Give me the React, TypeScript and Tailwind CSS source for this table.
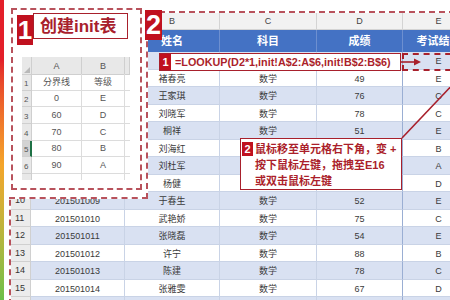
import React from "react";

const COLS = "grid-cols-[20px_94px_95px_97px_86px_72px]";
const MINI = "grid-cols-[10px_50px_43px_5px]";

type Row = { n: number; a?: string; b?: string; c?: string; d?: string; e?: string };

// rows hidden behind the callouts are left blank
const rows: Row[] = [
  { n: 2, e: "E" },
  { n: 3, b: "褚春亮", c: "数学", d: "49", e: "E" },
  { n: 4, b: "王家琪", c: "数学", d: "76", e: "C" },
  { n: 5, b: "刘晓军", c: "数学", d: "78", e: "C" },
  { n: 6, b: "桐祥", c: "数学", d: "51", e: "E" },
  { n: 7, b: "刘海红", e: "B" },
  { n: 8, b: "刘杜军", e: "A" },
  { n: 9, b: "杨健", e: "D" },
  { n: 10, a: "201501009", b: "于春生", c: "数学", d: "52", e: "E" },
  { n: 11, a: "201501010", b: "武艳娇", c: "数学", d: "75", e: "C" },
  { n: 12, a: "201501011", b: "张晓磊", c: "数学", d: "54", e: "E" },
  { n: 13, a: "201501012", b: "许宁", c: "数学", d: "88", e: "B" },
  { n: 14, a: "201501013", b: "陈建", c: "数学", d: "78", e: "C" },
  { n: 15, a: "201501014", b: "张雅雯", c: "数学", d: "67", e: "D" },
  { n: 16 },
];

const mini = [
  ["分界线", "等级"],
  ["0", "E"],
  ["60", "D"],
  ["70", "C"],
  ["80", "B"],
  ["90", "A"],
  ["", ""],
];

function Sheet() {
  return (
    <div className="w-max border-t-2 border-l-2 border-dashed border-[#b8525c]">
      {/* column letters */}
      <div className={`grid ${COLS} h-[17px] bg-[#f2f2f2] text-[9px] text-[#444]`}>
        {["", "", "B", "C", "D", "E"].map((c, i) => (
          <div key={i} className="flex items-end justify-center pb-[1px] border-r border-b border-[#d4d4d4]">
            {c}
          </div>
        ))}
      </div>
      {/* header */}
      <div className={`grid ${COLS} h-[22px] bg-[#4472c4] text-[11px] font-bold text-white`}>
        <div className="bg-[#ececec] border-r border-b border-[#d0d0d0]" />
        {["", "姓名", "科目", "成绩", "考试结果"].map((h, i) => (
          <div key={i} className="flex items-center justify-center pt-[1px] border-r border-[#6d8fd0] whitespace-nowrap">
            {h}
          </div>
        ))}
      </div>
      {rows.map((r) => {
        const band = r.n % 2 === 0 ? "bg-[#d9e1f2]" : "bg-white";
        return (
          <div key={r.n} className={`grid ${COLS} h-[17.5px] text-[9px] text-[#3a3a3a] ${band}`}>
            <div className="flex items-end pl-[4px] pb-[1px] bg-[#ececec] border-r border-b border-[#d0d0d0] text-[#333]">
              {r.n < 16 ? r.n : ""}
            </div>
            <div className="flex items-center justify-center pt-[3px] border-r border-b border-[#c9d3e6]">{r.a}</div>
            <div className="flex items-center justify-center pt-[3px] border-r border-b border-[#c9d3e6]">{r.b}</div>
            <div className="flex items-center justify-center pt-[3px] border-r border-b border-[#c9d3e6]">{r.c}</div>
            <div className="flex items-center justify-center pt-[3px] border-r border-b border-r-[#9aaed3] border-b-[#c9d3e6]">{r.d}</div>
            <div className="flex items-center justify-center pt-[3px] border-r border-b border-[#c9d3e6]">{r.e}</div>
          </div>
        );
      })}
    </div>
  );
}

function MiniSheet() {
  return (
    <div className="mt-[12px] ml-[5px] w-[108px] h-[123px] overflow-hidden text-[9px] text-[#555]">
      <div className={`grid ${MINI} h-[17px] bg-[#e8e8e8]`}>
        <div className="relative border-r border-b border-[#cfcfcf]">
          <svg className="absolute right-[1px] bottom-[1px]" width="6" height="6">
            <polygon points="6,0 6,6 0,6" fill="#b9b9b9" />
          </svg>
        </div>
        {["A", "B", ""].map((c, i) => (
          <div key={i} className="flex items-center justify-center pt-[3px] border-r border-b border-[#cfcfcf]">
            {c}
          </div>
        ))}
      </div>
      {mini.map((m, i) => (
        <div key={i} className={`grid ${MINI} h-[16.7px]`}>
          <div
            className={`flex items-end pl-[2px] text-[8px] border-b border-[#cfcfcf] ${
              i === 4 ? "bg-[#d3d3d3] border-r-2 border-r-[#1e7145]" : "bg-[#e8e8e8] border-r border-r-[#cfcfcf]"
            }`}
          >
            {i < 6 ? i + 1 : ""}
          </div>
          <div className="flex items-center justify-center pt-[1px] border-r border-b border-[#dcdcdc]">{m[0]}</div>
          <div className="flex items-center justify-center pt-[1px] border-r border-b border-[#dcdcdc]">{m[1]}</div>
          <div className="border-b border-[#dcdcdc]" />
        </div>
      ))}
    </div>
  );
}

export default function App() {
  return (
    <div className="relative w-[450px] h-[300px] overflow-hidden bg-white flex font-['Liberation_Sans','Noto_Sans_CJK_SC',sans-serif]">
      {/* coloured page edge */}
      <div className="w-[4px] h-full shrink-0 bg-gradient-to-b from-[#e3202a] from-20% via-[#f4a52a] via-55% to-[#69bf4a]" />
      <div className="flex-1 min-w-0 pl-[5px] pt-[11px]">
        <Sheet />
      </div>

      {/* white cut-out holding the init sheet (edge of box 2) */}
      <div className="absolute left-[9px] top-[11px] w-[139px] h-[188px] bg-white border-r-2 border-b-2 border-dashed border-[#b8525c]" />

      {/* box 1 */}
      <div className="absolute left-[11px] top-[8px] w-[131px] h-[182px] border-2 border-dashed border-[#b8525c] bg-white pl-[4px] pt-[3px]">
        <div className="flex items-start">
          <div className="mt-[2px] w-[16px] h-[30px] bg-[#c0111f] text-white text-[26px] font-bold flex items-center justify-center leading-none">
            1
          </div>
          <div className="w-[95px] h-[26px] border border-[#a8202c] flex items-center pl-[6px] text-[17px] font-bold text-[#a8202c] leading-none whitespace-nowrap">
            创建init表
          </div>
        </div>
        <MiniSheet />
      </div>

      {/* box 2 label */}
      <div className="absolute left-[145px] top-[10px] w-[17px] h-[30px] bg-[#c0111f] text-white text-[27px] font-bold flex items-center justify-center leading-none">
        2
      </div>

      {/* formula callout */}
      <div className="absolute left-[159px] top-[53px] w-[242px] h-[18px] border border-[#a8202c] bg-white flex items-stretch">
        <div className="w-[11px] bg-[#c0111f] text-white text-[11px] font-bold flex items-center justify-center">1</div>
        <div className="pl-[4px] flex items-center text-[10.8px] font-bold text-[#ab1f2b] whitespace-nowrap">
          =LOOKUP(D2*1,init!A$2:A$6,init!B$2:B$6)
        </div>
      </div>

      {/* E2 marker */}
      <div className="absolute left-[402px] top-[53px] w-[60px] h-[18px] border-2 border-dashed border-[#a8202c]" />

      <svg className="absolute left-0 top-0 pointer-events-none" width="450" height="300">
        <line x1="401" y1="62" x2="415" y2="62" stroke="#a8202c" strokeWidth="1.6" />
        <polygon points="421,62 414,58.5 414,65.5" fill="#a8202c" />
        <line x1="458" y1="79" x2="402" y2="138" stroke="#a8202c" strokeWidth="1.6" />
      </svg>

      {/* fill-handle callout */}
      <div className="absolute left-[240px] top-[138px] w-[162px] h-[52px] border border-[#a8202c] bg-white flex items-start pt-[2px]">
        <div className="mt-[1px] ml-[1px] w-[11px] h-[14px] bg-[#c0111f] text-white text-[11px] font-bold flex items-center justify-center shrink-0">
          2
        </div>
        <div className="ml-[2px] text-[11px] leading-[16px] font-bold text-[#ab1f2b] whitespace-nowrap">
          <div>鼠标移至单元格右下角，变 +</div>
          <div>按下鼠标左键，拖拽至E16</div>
          <div>或双击鼠标左键</div>
        </div>
      </div>
    </div>
  );
}
